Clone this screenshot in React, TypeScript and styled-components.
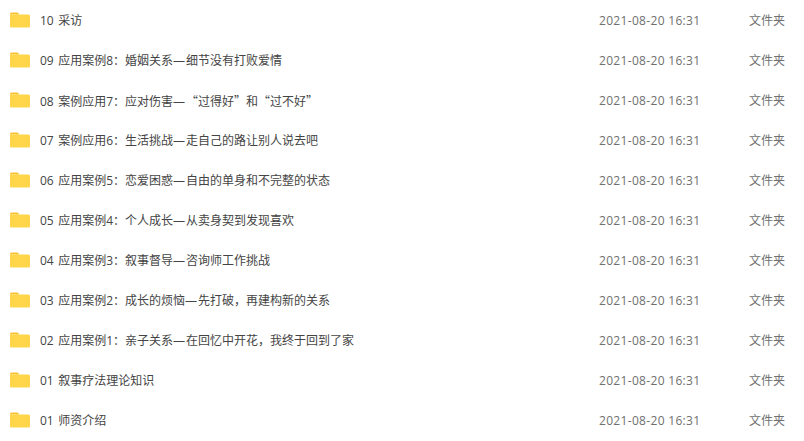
import React from "react";
import styled, { createGlobalStyle } from "styled-components";

const GlobalStyle = createGlobalStyle`
    html, body {
        margin: 0;
        padding: 0;
        background: #fff;
        overflow: hidden;
    }
`;

const List = styled.div`
    width: 804px;
    height: 441px;
    overflow: hidden;
    font-family: "Open Sans", "Noto Sans CJK SC", sans-serif;
`;

const Row = styled.div`
    display: grid;
    grid-template-columns: 40px 559px 150px 1fr;
    align-items: center;
    height: 40px;
    font-size: 12px;
    line-height: 16px;
`;

const IconCell = styled.div`
    display: flex;
    padding-left: 10px;
`;

const Name = styled.span`
    color: #444;
    font-size: 12px;
    padding-top: 2px;
    white-space: nowrap;
    word-spacing: 1.3px;
`;

const Quote = styled.span`
    font-family: "Noto Sans CJK SC", sans-serif;
`;

const Dash = styled.span`
    letter-spacing: 1px;
`;

const Time = styled.span`
    color: #707070;
    font-size: 12px;
    letter-spacing: 0.32px;
    padding-top: 2px;
    white-space: nowrap;
`;

const Kind = styled.span`
    color: #707070;
    font-size: 12px;
    padding-top: 2px;
`;

const FolderIcon = () => (
    <svg width="20" height="16" viewBox="0 0 20 16">
        <path d="M0 2 a1.5 1.5 0 0 1 1.5-1.5 H7 a1.5 1.5 0 0 1 1.2 .6 L9.5 2.5 H0 Z" fill="#fbc02d" />
        <path d="M0 2.5 H18.5 a1.5 1.5 0 0 1 1.5 1.5 V14 a1.5 1.5 0 0 1-1.5 1.5 H1.5 A1.5 1.5 0 0 1 0 14 Z" fill="#ffd54a" />
    </svg>
);

const names = [
    "10 采访",
    "09 应用案例8：婚姻关系—细节没有打败爱情",
    "08 案例应用7：应对伤害—“过得好”和“过不好”",
    "07 案例应用6：生活挑战—走自己的路让别人说去吧",
    "06 应用案例5：恋爱困惑—自由的单身和不完整的状态",
    "05 应用案例4：个人成长—从卖身契到发现喜欢",
    "04 应用案例3：叙事督导—咨询师工作挑战",
    "03 应用案例2：成长的烦恼—先打破，再建构新的关系",
    "02 应用案例1：亲子关系—在回忆中开花，我终于回到了家",
    "01 叙事疗法理论知识",
    "01 师资介绍",
];

// curly quotes are full width in the original, the dash a bit wider than the font's
const renderName = (name: string) =>
    name.split(/([—“”])/).map((part, i) => {
        if (i % 2 === 0) return part;
        return part === "—" ? <Dash key={i}>{part}</Dash> : <Quote key={i}>{part}</Quote>;
    });

export default function App() {
    return (
        <>
            <GlobalStyle />
            <List>
                {names.map(name => (
                    <Row key={name}>
                        <IconCell>
                            <FolderIcon />
                        </IconCell>
                        <Name>{renderName(name)}</Name>
                        <Time>2021-08-20 16:31</Time>
                        <Kind>文件夹</Kind>
                    </Row>
                ))}
            </List>
        </>
    );
}
